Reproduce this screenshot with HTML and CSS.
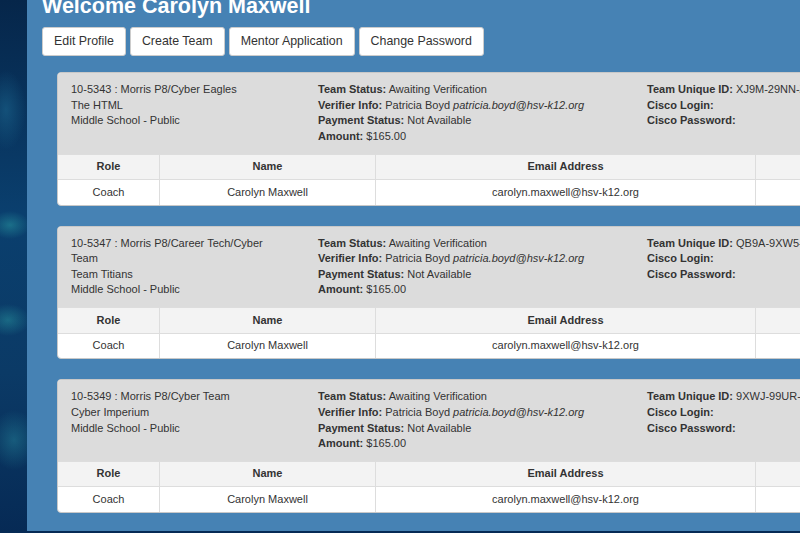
FILE: index.html
```html
<!DOCTYPE html>
<html>
<head>
<meta charset="utf-8">
<link rel="stylesheet" href="styles.css">
</head>
<body>
<div class="side"></div>
<main class="panel">
  <h1 class="title">Welcome Carolyn Maxwell</h1>
  <div class="actions">
    <button class="btn">Edit Profile</button>
    <button class="btn">Create Team</button>
    <button class="btn">Mentor Application</button>
    <button class="btn">Change Password</button>
  </div>

  <section class="card">
    <div class="card-head">
      <div class="col">10-5343 : Morris P8/Cyber Eagles<br>The HTML<br>Middle School - Public</div>
      <div class="col"><b>Team Status:</b> Awaiting Verification<br><b>Verifier Info:</b> Patricia Boyd <i>patricia.boyd@hsv-k12.org</i><br><b>Payment Status:</b> Not Available<br><b>Amount:</b> $165.00</div>
      <div class="col nowrap"><b>Team Unique ID:</b> XJ9M-29NN-ZQ4P<br><b>Cisco Login:</b><br><b>Cisco Password:</b></div>
    </div>
    <table class="members">
      <thead><tr><th class="c-role">Role</th><th class="c-name">Name</th><th class="c-email">Email Address</th><th>Status</th></tr></thead>
      <tbody><tr><td>Coach</td><td>Carolyn Maxwell</td><td>carolyn.maxwell@hsv-k12.org</td><td></td></tr></tbody>
    </table>
  </section>

  <section class="card">
    <div class="card-head">
      <div class="col">10-5347 : Morris P8/Career Tech/Cyber Team<br>Team Titians<br>Middle School - Public</div>
      <div class="col"><b>Team Status:</b> Awaiting Verification<br><b>Verifier Info:</b> Patricia Boyd <i>patricia.boyd@hsv-k12.org</i><br><b>Payment Status:</b> Not Available<br><b>Amount:</b> $165.00</div>
      <div class="col nowrap"><b>Team Unique ID:</b> QB9A-9XW5-RT2K<br><b>Cisco Login:</b><br><b>Cisco Password:</b></div>
    </div>
    <table class="members">
      <thead><tr><th class="c-role">Role</th><th class="c-name">Name</th><th class="c-email">Email Address</th><th>Status</th></tr></thead>
      <tbody><tr><td>Coach</td><td>Carolyn Maxwell</td><td>carolyn.maxwell@hsv-k12.org</td><td></td></tr></tbody>
    </table>
  </section>

  <section class="card">
    <div class="card-head">
      <div class="col">10-5349 : Morris P8/Cyber Team<br>Cyber Imperium<br>Middle School - Public</div>
      <div class="col"><b>Team Status:</b> Awaiting Verification<br><b>Verifier Info:</b> Patricia Boyd <i>patricia.boyd@hsv-k12.org</i><br><b>Payment Status:</b> Not Available<br><b>Amount:</b> $165.00</div>
      <div class="col nowrap"><b>Team Unique ID:</b> 9XWJ-99UR-E7MC<br><b>Cisco Login:</b><br><b>Cisco Password:</b></div>
    </div>
    <table class="members">
      <thead><tr><th class="c-role">Role</th><th class="c-name">Name</th><th class="c-email">Email Address</th><th>Status</th></tr></thead>
      <tbody><tr><td>Coach</td><td>Carolyn Maxwell</td><td>carolyn.maxwell@hsv-k12.org</td><td></td></tr></tbody>
    </table>
  </section>
</main>
</body>
</html>
```

FILE: styles.css
```css
html, body {
  margin: 0;
  padding: 0;
  height: 533px;
  overflow: hidden;
}
body {
  display: flex;
  align-items: flex-start;
  font-family: "Liberation Sans", Arial, sans-serif;
  color: #333;
  background:
    radial-gradient(ellipse 20px 14px at 10px 225px, rgba(40,150,160,0.55), transparent),
    radial-gradient(ellipse 22px 16px at 8px 320px, rgba(40,150,160,0.5), transparent),
    radial-gradient(ellipse 24px 30px at 14px 440px, rgba(40,140,160,0.45), transparent),
    radial-gradient(ellipse 20px 40px at 6px 110px, rgba(30,110,150,0.5), transparent),
    linear-gradient(180deg, #06264a 0%, #0a3f6e 40%, #0b3a66 70%, #062a55 100%);
}
.side {
  flex: 0 0 27px;
}
.panel {
  flex: 0 0 auto;
  width: 900px;
  background: #4682b4;
  padding: 0 15px 18px;
  box-sizing: border-box;
}
.title {
  margin: -6px 0 0;
  font-size: 21.5px;
  line-height: 24px;
  font-weight: bold;
  color: #fff;
}
.actions {
  margin-top: 9px;
  display: flex;
  gap: 4px;
}
.btn {
  font-family: "Liberation Sans", Arial, sans-serif;
  font-size: 12.4px;
  line-height: 17px;
  color: #333;
  background: #fff;
  border: 1px solid #ccc;
  border-radius: 3px;
  padding: 5px 11px;
}
.card {
  margin: 16px 0 0 15px;
  width: 860px;
  background: #fff;
  border: 1px solid #c8c8c8;
  border-radius: 4px;
  overflow: hidden;
  font-size: 11px;
  line-height: 15.6px;
}
.card + .card {
  margin-top: 20px;
}
.card-head {
  background: #dcdcdc;
  display: grid;
  grid-template-columns: 205px 287px 1fr;
  column-gap: 42px;
  padding: 9px 13px 8.5px;
  min-height: 63px;
}
.nowrap {
  white-space: nowrap;
}
.members {
  width: 100%;
  border-collapse: collapse;
}
.members th, .members td {
  border: 1px solid #ddd;
  padding: 4.5px 6px;
  text-align: center;
  font-size: 11px;
  line-height: 15.6px;
}
.members tr > :first-child {
  border-left: 0;
}
.members tbody tr:last-child td {
  border-bottom: 0;
}
.members thead th {
  background: #f3f3f3;
  font-weight: bold;
}
.c-role { width: 89px; }
.c-name { width: 203px; }
.c-email { width: 367px; }
```
